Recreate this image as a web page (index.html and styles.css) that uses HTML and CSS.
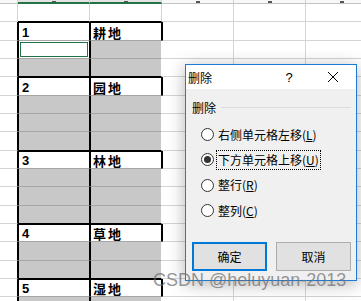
FILE: index.html
```html
<!doctype html>
<html lang="zh-CN">
  <head>
    <meta charset="utf-8">
    <meta name="viewport" content="width=device-width, initial-scale=1.0">
    <title>删除</title>
    <link rel="stylesheet" href="styles.css">
  </head>
  <body>
    <div class="screen">
      <!-- worksheet -->
      <div class="sheet">
        <div class="row head">
          <div class="cell a"></div>
          <div class="cell on"><i class="tick"></i></div>
          <div class="cell on"><i class="tick"></i></div>
          <div class="cell"><i class="tick"></i></div>
          <div class="cell"><i class="tick"></i></div>
          <div class="cell"><i class="tick"></i></div>
        </div>
        <div class="row last">
          <div class="cell a"></div><div class="cell k"></div><div class="cell v"></div>
          <div class="cell"></div><div class="cell"></div><div class="cell"></div>
        </div>

        <div class="row data title">
          <div class="cell a"></div><div class="cell k">1</div><div class="cell v">耕地</div>
          <div class="cell d"></div><div class="cell"></div><div class="cell"></div>
        </div>
        <div class="row data fill">
          <div class="cell a"></div><div class="cell k sel"></div><div class="cell v"></div>
          <div class="cell"></div><div class="cell"></div><div class="cell"></div>
        </div>
        <div class="row data fill last">
          <div class="cell a"></div><div class="cell k"></div><div class="cell v"></div>
          <div class="cell"></div><div class="cell"></div><div class="cell"></div>
        </div>

        <div class="row data title">
          <div class="cell a"></div><div class="cell k">2</div><div class="cell v">园地</div>
          <div class="cell d"></div><div class="cell"></div><div class="cell"></div>
        </div>
        <div class="row data fill">
          <div class="cell a"></div><div class="cell k"></div><div class="cell v"></div>
          <div class="cell"></div><div class="cell"></div><div class="cell"></div>
        </div>
        <div class="row data fill">
          <div class="cell a"></div><div class="cell k"></div><div class="cell v"></div>
          <div class="cell"></div><div class="cell"></div><div class="cell"></div>
        </div>
        <div class="row data fill last">
          <div class="cell a"></div><div class="cell k"></div><div class="cell v"></div>
          <div class="cell"></div><div class="cell"></div><div class="cell"></div>
        </div>

        <div class="row data title">
          <div class="cell a"></div><div class="cell k">3</div><div class="cell v">林地</div>
          <div class="cell d"></div><div class="cell"></div><div class="cell"></div>
        </div>
        <div class="row data fill">
          <div class="cell a"></div><div class="cell k"></div><div class="cell v"></div>
          <div class="cell"></div><div class="cell"></div><div class="cell"></div>
        </div>
        <div class="row data fill">
          <div class="cell a"></div><div class="cell k"></div><div class="cell v"></div>
          <div class="cell"></div><div class="cell"></div><div class="cell"></div>
        </div>
        <div class="row data fill last">
          <div class="cell a"></div><div class="cell k"></div><div class="cell v"></div>
          <div class="cell"></div><div class="cell"></div><div class="cell"></div>
        </div>

        <div class="row data title">
          <div class="cell a"></div><div class="cell k">4</div><div class="cell v">草地</div>
          <div class="cell d"></div><div class="cell"></div><div class="cell"></div>
        </div>
        <div class="row data fill">
          <div class="cell a"></div><div class="cell k"></div><div class="cell v"></div>
          <div class="cell"></div><div class="cell"></div><div class="cell"></div>
        </div>
        <div class="row data fill last">
          <div class="cell a"></div><div class="cell k"></div><div class="cell v"></div>
          <div class="cell"></div><div class="cell"></div><div class="cell"></div>
        </div>

        <div class="row data title">
          <div class="cell a"></div><div class="cell k">5</div><div class="cell v">湿地</div>
          <div class="cell d"></div><div class="cell"></div><div class="cell"></div>
        </div>
        <div class="row data fill">
          <div class="cell a"></div><div class="cell k"></div><div class="cell v"></div>
          <div class="cell"></div><div class="cell"></div><div class="cell"></div>
        </div>
      </div>

      <!-- delete dialog -->
      <div class="dialog">
        <div class="titlebar">
          <span class="dlg-title">删除</span>
          <span class="cap help">?</span>
          <span class="cap close">
            <svg viewBox="0 0 10 10" width="10" height="10">
              <path d="M0 0 L10 10 M10 0 L0 10" stroke="#000" stroke-width="1" fill="none"></path>
            </svg>
          </span>
        </div>
        <div class="dlg-body">
          <div class="group">
            <span>删除</span>
            <i class="rule"></i>
          </div>
          <ul class="options">
            <li class="option"><span class="radio"></span><span class="label">右侧单元格左移(<u>L</u>)</span></li>
            <li class="option focus"><span class="radio checked"></span><span class="label">下方单元格上移(<u>U</u>)</span></li>
            <li class="option"><span class="radio"></span><span class="label">整行(<u>R</u>)</span></li>
            <li class="option"><span class="radio"></span><span class="label">整列(<u>C</u>)</span></li>
          </ul>
          <div class="buttons">
            <button class="btn ok">确定</button>
            <button class="btn">取消</button>
          </div>
        </div>
      </div>

      <div class="watermark">CSDN @heluyuan-2013</div>
    </div>
  </body>
</html>
```

FILE: styles.css
```css
* {
  margin: 0;
  padding: 0;
  box-sizing: border-box;
}

body {
  width: 361px;
  height: 301px;
  overflow: hidden;
  background: #fff;
  font-family: "Noto Sans CJK SC", sans-serif;
  color: #000;
}

.screen {
  position: relative;
  width: 361px;
  height: 301px;
  overflow: hidden;
}

/* worksheet grid */
.row {
  display: grid;
  grid-template-columns: 18px repeat(5, 72px);
  height: 18.333px;
}

.cell {
  border-right: 1px solid #d4d4d4;
  border-bottom: 1px solid #d4d4d4;
  overflow: hidden;
  white-space: nowrap;
}

.row.head {
  height: 4px;
}

.head .cell {
  background: #f7f7f7;
  border-bottom-color: #c4c4c4;
  display: flex;
  justify-content: center;
  align-items: flex-end;
}

/* bottoms of the column letters peeking above the scroll edge */
.head .tick {
  width: 4px;
  height: 2px;
  background: #555;
}

.head .on {
  background: #e3e3e3;
  border-bottom: 2px solid #217346;
}

.head .on .tick {
  height: 1px;
}

/* bordered table */
.data .a {
  border-right-color: #000;
}

.data .k,
.data .v {
  border-left: 1px solid #000;
  border-bottom-color: #a6a6a6;
}

.data .k {
  border-right-color: #000;
}

.title .k,
.title .v {
  border-top: 1px solid #000;
  background: #fff;
  font-weight: 700;
  padding: 0 2px;
  display: flex;
  align-items: flex-end;
}

.title .k {
  font-family: "Liberation Sans", sans-serif;
  font-size: 13px;
  line-height: 14px;
  padding-left: 3px;
}

.title .v {
  font-size: 13px;
  line-height: 15px;
  letter-spacing: 2px;
  border-right-color: #000;
}

.title .d {
  border-left: 1px solid #000;
}

.fill .k,
.fill .v {
  background: #c8c8c8;
}

.fill .v {
  border-right-color: #fff;
}

.last .k,
.last .v {
  border-bottom-color: #000;
}

.fill .sel {
  background: #fff;
  box-shadow: inset 0 0 0 1px #fff, inset 0 0 0 2px #217346;
}

/* dialog */
.dialog {
  position: absolute;
  left: 185px;
  top: 64px;
  width: 172px;
  height: 217px;
  border: 1px solid #1c7cd5;
  background: #f0f0f0;
  box-shadow: 0 3px 16px rgba(0, 0, 0, 0.3);
  display: flex;
  flex-direction: column;
  font-size: 12px;
}

.titlebar {
  height: 24px;
  background: #fff;
  display: flex;
  align-items: center;
}

.dlg-title {
  flex: 1;
  padding-left: 2px;
}

.cap {
  width: 46px;
  height: 24px;
  display: flex;
  align-items: center;
  justify-content: center;
}

.help {
  font-family: "Liberation Sans", sans-serif;
  font-size: 13px;
  padding-left: 4px;
}

.dlg-body {
  flex: 1;
  padding: 10px 5px 9px 6px;
  display: flex;
  flex-direction: column;
}

.group {
  height: 16px;
  display: flex;
  align-items: center;
  gap: 5px;
}

.group .rule {
  flex: 1;
  height: 1px;
  background: #dcdcdc;
}

.options {
  list-style: none;
  margin-top: 7px;
  padding-left: 9px;
}

.option {
  height: 25.3px;
  display: flex;
  align-items: center;
  gap: 2px;
}

.radio {
  width: 13px;
  height: 13px;
  border: 1px solid #333;
  border-radius: 50%;
  background: #fff;
  display: flex;
  align-items: center;
  justify-content: center;
}

.radio.checked::after {
  content: "";
  width: 7px;
  height: 7px;
  border-radius: 50%;
  background: #333;
}

.label {
  border: 1px dotted transparent;
  padding: 0 1px;
  line-height: 18px;
}

.option.focus .label {
  border-color: #000;
}

.buttons {
  margin-top: auto;
  display: flex;
  gap: 9px;
}

.btn {
  width: 75px;
  height: 29px;
  border: 1px solid #adadad;
  background: #e1e1e1;
  font: inherit;
  color: #000;
}

.btn.ok {
  border: 2px solid #0078d7;
}

.watermark {
  position: absolute;
  left: 153px;
  top: 270px;
  font-family: "Liberation Sans", sans-serif;
  font-size: 18px;
  line-height: 20px;
  color: rgba(110, 110, 110, 0.72);
  white-space: nowrap;
}
```
